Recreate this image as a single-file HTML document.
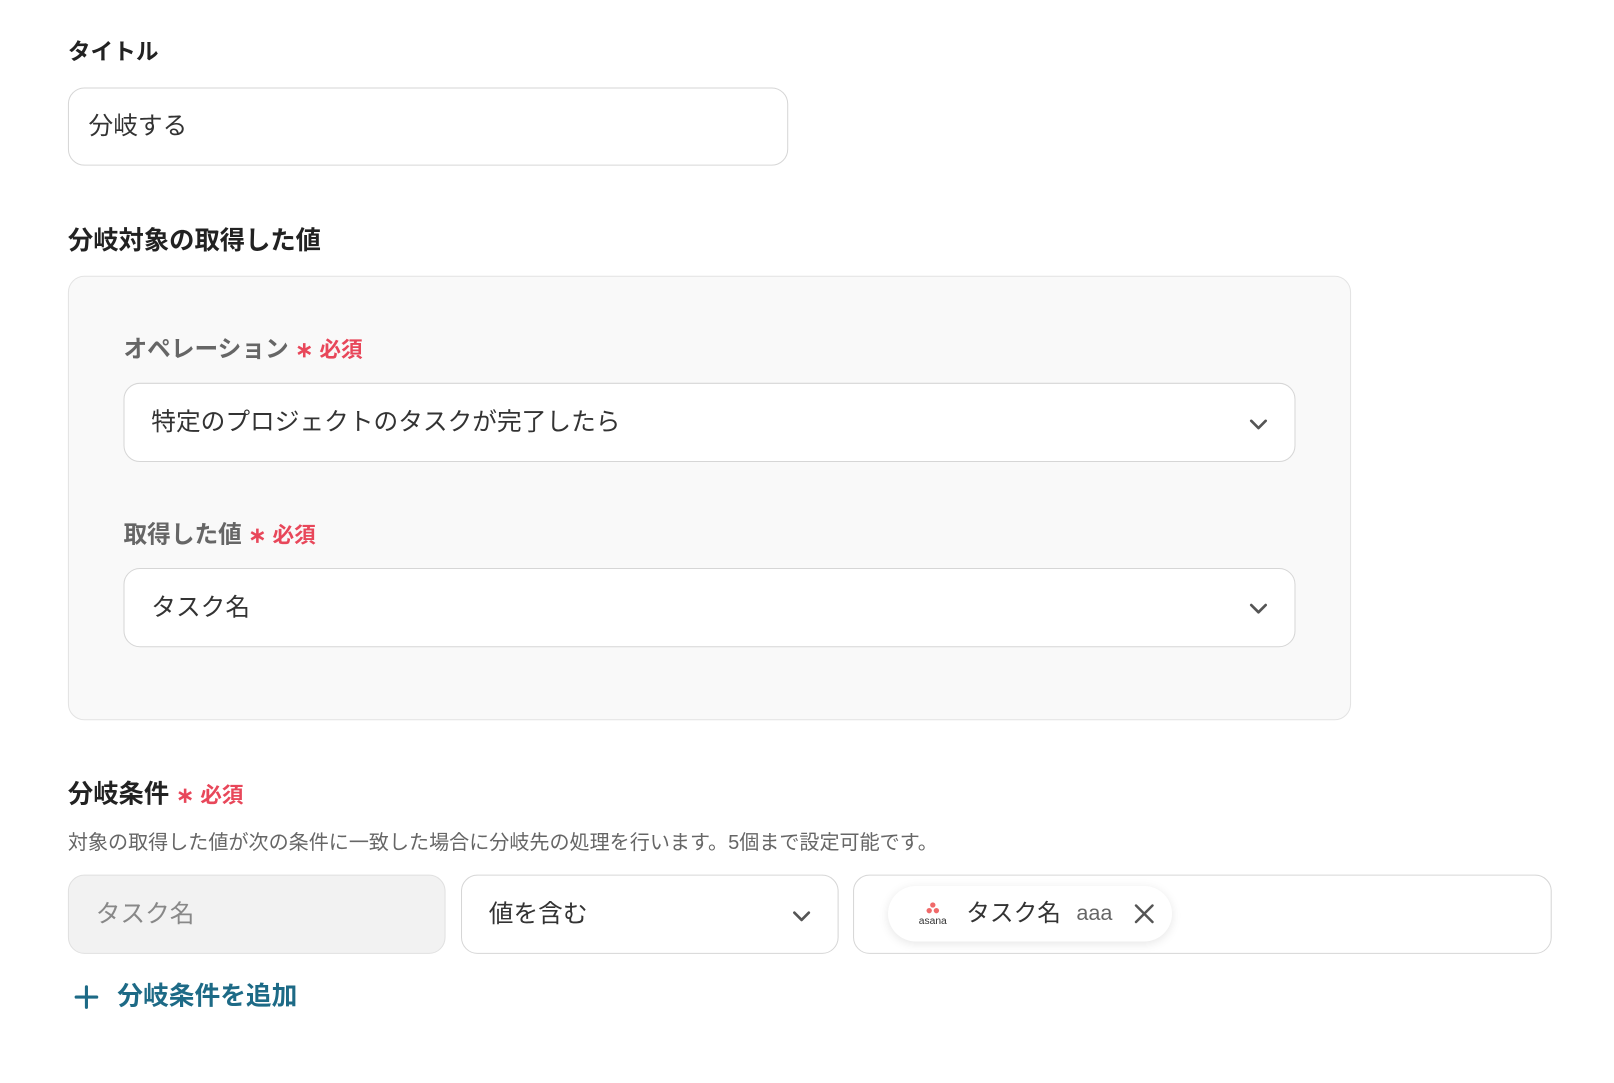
<!DOCTYPE html>
<html><head><meta charset="utf-8"><style>
body{margin:0;width:1614px;height:1082px;background:#fff;font-family:"Liberation Sans","Noto Sans CJK JP",sans-serif;color:#333;position:relative;overflow:hidden}
#w{position:absolute;left:0;top:0;width:1570px;height:1052px;transform:scale(1.029);transform-origin:0 0}
.a{position:absolute}
.h{font-size:24.6px;font-weight:700;color:#222;line-height:30px}
.lbl{font-size:23px;font-weight:700;color:#666;line-height:30px}
.req{color:#e8475a;font-size:21px;font-weight:700}
.box{position:absolute;box-sizing:border-box;border:1px solid #d6d6d6;border-radius:16px;background:#fff;font-size:24px;line-height:30px;display:flex;align-items:center;padding-left:26px;color:#333}
.chev{position:absolute;width:20px;height:12px}
</style></head><body><div id="w">
<div class="a h" style="left:66px;top:36px;font-size:22px">タイトル</div>
<div class="box" style="left:66px;top:85px;width:700px;height:76px;padding-left:19px">分岐する</div>
<div class="a h" style="left:66px;top:220px">分岐対象の取得した値</div>
<div class="a" style="left:66px;top:268px;width:1247px;height:432px;box-sizing:border-box;background:#f9f9f9;border:1px solid #e3e3e3;border-radius:16px"></div>
<div class="a lbl" style="left:120px;top:324px">オペレーション <span class="req">∗ 必須</span></div>
<div class="box" style="left:120px;top:372px;width:1139px;height:77px">特定のプロジェクトのタスクが完了したら
<svg class="chev" style="left:1092px;top:34px" viewBox="0 0 20 12"><path d="M3 2l7 7 7-7" fill="none" stroke="#555" stroke-width="2.6" stroke-linecap="round" stroke-linejoin="round"/></svg></div>
<div class="a lbl" style="left:120px;top:504px">取得した値 <span class="req">∗ 必須</span></div>
<div class="box" style="left:120px;top:552px;width:1139px;height:77px">タスク名
<svg class="chev" style="left:1092px;top:33px" viewBox="0 0 20 12"><path d="M3 2l7 7 7-7" fill="none" stroke="#555" stroke-width="2.6" stroke-linecap="round" stroke-linejoin="round"/></svg></div>
<div class="a h" style="left:66px;top:758px">分岐条件 <span class="req">∗ 必須</span></div>
<div class="a" style="left:66px;top:807px;font-size:19.5px;color:#666;line-height:24px">対象の取得した値が次の条件に一致した場合に分岐先の処理を行います。5個まで設定可能です。</div>
<div class="box" style="left:66px;top:850px;width:367px;height:77px;background:#f2f2f2;color:#888;border-color:#e0e0e0">タスク名</div>
<div class="box" style="left:448px;top:850px;width:367px;height:77px">値を含む
<svg class="chev" style="left:320px;top:34px" viewBox="0 0 20 12"><path d="M3 2l7 7 7-7" fill="none" stroke="#555" stroke-width="2.6" stroke-linecap="round" stroke-linejoin="round"/></svg></div>
<div class="box" style="left:829px;top:850px;width:679px;height:77px"></div>
<div class="a" style="left:863px;top:861px;width:276px;height:54px;background:#fff;border-radius:27px;box-shadow:0 2px 10px rgba(0,0,0,0.1)">
<svg class="a" style="left:26px;top:15px" width="36" height="24" viewBox="0 0 36 24"><circle cx="17.5" cy="3.5" r="2.6" fill="#f06a6a"/><circle cx="14" cy="9" r="2.6" fill="#f06a6a"/><circle cx="21" cy="9" r="2.6" fill="#f06a6a"/><text x="17.5" y="22" font-size="10" text-anchor="middle" fill="#333" font-family="Liberation Sans">asana</text></svg>
<div class="a" style="left:76px;top:10px;font-size:23px;line-height:32px;color:#333">タスク名</div>
<div class="a" style="left:183px;top:12px;font-size:21px;line-height:30px;color:#666">aaa</div>
<svg class="a" style="left:238px;top:16px" width="22" height="22" viewBox="0 0 22 22"><path d="M3 3l16 16M19 3L3 19" stroke="#555" stroke-width="2.4" stroke-linecap="round"/></svg>
</div>
<svg class="a" style="left:72px;top:957px" width="24" height="24" viewBox="0 0 24 24"><path d="M12 2v20M2 12h20" stroke="#1d6a86" stroke-width="3" stroke-linecap="round"/></svg>
<div class="a" style="left:114px;top:953px;font-size:25px;font-weight:700;color:#1d6a86;line-height:30px">分岐条件を追加</div>
</div></body></html>
